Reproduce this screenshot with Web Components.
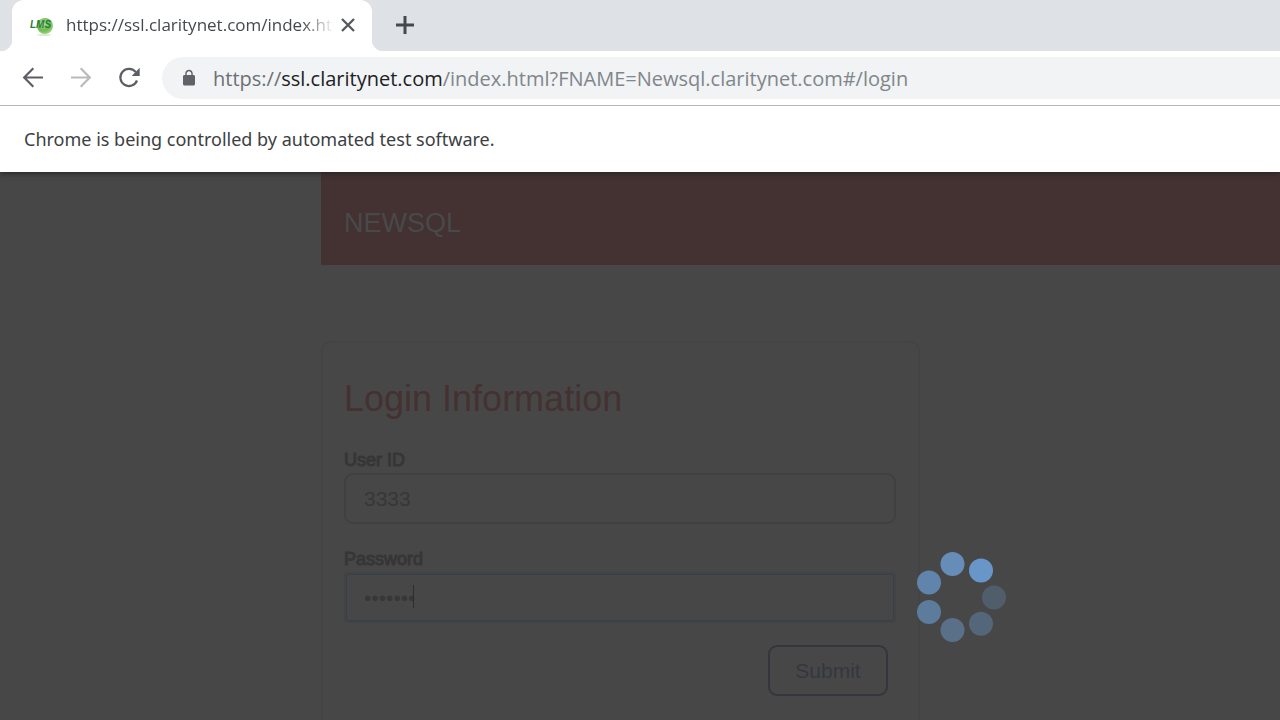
<!DOCTYPE html>
<html lang="en">
<head>
<meta charset="utf-8">
<title>Login</title>
<style>
html, body { margin: 0; height: 100%; }
body { font-family: "Open Sans", "Noto Sans", sans-serif; background: #474747; }
</style>
</head>
<body>
<app-window></app-window>
<script>
function define(name, html, setup) {
  const t = document.createElement('template');
  t.innerHTML = html;
  customElements.define(name, class extends HTMLElement {
    constructor() {
      super();
      this.attachShadow({ mode: 'open' }).appendChild(t.content.cloneNode(true));
    }
    connectedCallback() {
      if (setup) setup(this);
    }
  });
}

define('tab-strip', `
<style>
:host { display: flex; height: 51px; background: #dee1e6; overflow: hidden; }
.edge { width: 12px; background: radial-gradient(circle at 0 39px, #dee1e6 12px, #fff 13px); }
.edge.r { background: radial-gradient(circle at 100% 39px, #dee1e6 12px, #fff 13px); }
.edge i { display: block; height: 39px; background: #dee1e6; }
.tab { display: flex; align-items: center; box-sizing: border-box; width: 360px; padding: 0 12px 2px 17px; background: #fff; border-radius: 12px 12px 0 0; }
.icon { flex: none; margin-right: 12px; }
.title { flex: 1; overflow: hidden; white-space: nowrap; font-size: 17px; line-height: 24px; color: #45494d; -webkit-mask-image: linear-gradient(90deg, #000 calc(100% - 32px), transparent); mask-image: linear-gradient(90deg, #000 calc(100% - 32px), transparent); }
button { flex: none; border: 0; padding: 0 0 2px; background: none; display: flex; align-items: center; justify-content: center; }
.close { width: 24px; padding: 0; height: 24px; margin-left: 2px; }
.new { width: 42px; }
</style>
<div class="edge"><i></i></div>
<div class="tab" role="tab">
  <svg class="icon" width="25" height="24" viewBox="0 0 25 24">
    <defs><radialGradient id="g" cx=".4" cy=".35" r=".7"><stop offset="0" stop-color="#c6e8a8"/><stop offset=".6" stop-color="#6fb84e"/><stop offset="1" stop-color="#a5d68c"/></radialGradient></defs>
    <circle cx="16" cy="13" r="8" fill="url(#g)"/>
    <ellipse cx="15" cy="22" rx="7" ry="1" fill="#d8ecd0"/>
    <text x="1" y="15" font-family="Liberation Sans, Arial, sans-serif" font-size="10" font-weight="700" font-style="italic" fill="#23803c">LMS</text>
  </svg>
  <span class="title">https://ssl.claritynet.com/index.ht</span>
  <button class="close" aria-label="Close tab"><svg width="14" height="14" viewBox="0 0 14 14"><path d="M1 1 13 13M13 1 1 13" stroke="#55595e" stroke-width="2.3"/></svg></button>
</div>
<div class="edge r"><i></i></div>
<button class="new" aria-label="New tab"><svg width="18" height="18" viewBox="0 0 18 18"><path d="M9 0V18M0 9H18" stroke="#45494d" stroke-width="3"/></svg></button>
`);

define('tool-bar', `
<style>
:host { display: flex; align-items: center; gap: 18px; height: 54px; padding-left: 18px; background: #fff; border-bottom: 1px solid #b6b6b6; }
button { flex: none; border: 0; padding: 0; background: none; width: 30px; height: 30px; color: #5b5f64; }
button:disabled { color: #bababa; }
svg { display: block; fill: currentColor; }
.line { fill: none; stroke: currentColor; stroke-width: 2.2; }
.box { flex: 1; display: flex; align-items: center; gap: 15px; height: 42px; padding-left: 18px; background: #f1f3f4; border-radius: 21px 0 0 21px; overflow: hidden; color: #5f6368; }
.url { padding-top: 2px; font-size: 20px; line-height: 28px; white-space: nowrap; color: #80868b; outline: 0; }
.scheme { color: #6c7075; }
.host { color: #202124; }
</style>
<button aria-label="Back"><svg width="30" height="30" viewBox="0 0 30 30"><path class="line" d="M25 14.500H6.500M15.300 5.300 6.200 14.500 15.300 23.700"/></svg></button>
<button aria-label="Forward" disabled><svg width="30" height="30" viewBox="0 0 30 30"><path class="line" d="M5 14.500H23.500M14.700 5.300 23.800 14.500 14.700 23.700"/></svg></button>
<button aria-label="Reload"><svg width="30" height="30" viewBox="0 0 30 30"><path class="line" d="M23 17.500A8.600 8.600 0 1 1 21.800 9.200"/><path d="M25.700 4.700V13H17.700z"/></svg></button>
<div class="box">
  <svg width="18" height="18" viewBox="0 0 24 24"><path d="M18 8h-1V6c0-2.76-2.24-5-5-5S7 3.240 7 6v2H6c-1.100 0-2 .9-2 2v10c0 1.100.9 2 2 2h12c1.100 0 2-.9 2-2V10c0-1.100-.9-2-2-2zm-2.900 0H8.900V6c0-1.710 1.390-3.100 3.100-3.100s3.100 1.390 3.100 3.100v2z"/></svg>
  <div class="url" role="textbox" aria-label="Address" contenteditable="true" spellcheck="false"><span class="scheme">https://</span><span class="host">ssl.claritynet.com</span>/index.html?FNAME=Newsql.claritynet.com#/login</div>
</div>
`);

define('info-bar', `
<style>
:host { display: flex; align-items: center; height: 66px; padding: 0 24px; background: #fff; color: #3c4043; font-family: "Noto Sans", sans-serif; font-size: 18px; line-height: 26px; box-shadow: 0 1px 6px #222; }
</style>
<slot></slot>
`);

define('form-field', `
<style>
:host { display: block; margin-bottom: 22px; }
label { display: block; font-size: 18px; line-height: 26px; color: #363636; -webkit-text-stroke: 1px #363636; }
.wrap { position: relative; }
input { display: block; box-sizing: border-box; width: 100%; height: 51px; padding: 0 18px; border: 2px solid #404040; border-radius: 9px; background: #474747; color: #373737; font: 21px "Liberation Sans", Arial, sans-serif; outline: 0; }
.caret { display: none; position: absolute; left: 69px; top: 13px; width: 1px; height: 23px; background: #2e2e2e; }
:host([active]) input { border-color: #434343; border-radius: 4px; box-shadow: inset 0 0 0 1px #35404a; }
:host([active]) .caret { display: block; }
</style>
<label for="i"></label>
<div class="wrap"><input id="i"><span class="caret"></span></div>
`, el => {
  const r = el.shadowRoot;
  r.querySelector('label').textContent = el.getAttribute('label');
  const i = r.querySelector('input');
  i.type = el.getAttribute('type');
  i.value = el.getAttribute('value');
});

define('page-header', `
<style>
:host { display: block; background: #443132; color: #474a49; padding: 35px 23px 26px; font-size: 27px; line-height: 32px; }
</style>
<slot></slot>
`);

define('login-card', `
<style>
:host { display: block; box-sizing: border-box; max-width: 599px; min-height: 420px; padding: 36px 22px 24px 21px; border: 2px solid #444; border-radius: 9px; }
h1 { margin: 0 0 28px; font-size: 36px; line-height: 40px; font-weight: 400; color: #443132; }
.actions { display: flex; justify-content: flex-end; padding-right: 8px; }
button { box-sizing: border-box; height: 51px; width: 120px; padding: 0; border: 2px solid #35353d; border-radius: 9px; background: none; color: #35373e; font: 21px "Liberation Sans", Arial, sans-serif; }
</style>
<h1>Login Information</h1>
<form-field label="User ID" type="text" value="3333"></form-field>
<form-field label="Password" type="password" value="newsql1" active></form-field>
<div class="actions"><button type="button">Submit</button></div>
`);

define('loading-spinner', `
<style>
:host { display: block; width: 90px; height: 90px; }
svg { display: block; }
</style>
<svg width="90" height="90" viewBox="0 0 90 90" role="img" aria-label="Loading">
  <circle cx="64" cy="18.500" r="12" fill="#6996c9"/>
  <circle cx="35.500" cy="12" r="12" fill="#668db8"/>
  <circle cx="12" cy="30.500" r="12" fill="#6084ac"/>
  <circle cx="12" cy="60" r="12" fill="#5d7b9b"/>
  <circle cx="35.500" cy="78" r="12" fill="#5a7089"/>
  <circle cx="64" cy="71.800" r="12" fill="#546679"/>
  <circle cx="77" cy="45.500" r="12" fill="#505e6b"/>
</svg>
`);

define('login-page', `
<style>
:host { display: block; position: relative; flex: 1; min-height: 0; overflow: hidden; background: #474747; font-family: "Liberation Sans", Arial, sans-serif; }
main { margin-left: calc(25% + 1px); }
login-card { margin-top: 76px; }
loading-spinner { position: absolute; left: calc(75% - 43px); top: 380px; }
</style>
<main>
  <page-header>NEWSQL</page-header>
  <login-card></login-card>
</main>
<loading-spinner></loading-spinner>
`);

define('app-window', `
<style>
:host { display: flex; flex-direction: column; height: 100vh; overflow: hidden; }
tab-strip, tool-bar, info-bar { flex: none; }
info-bar { z-index: 1; }
tool-bar { z-index: 2; }
</style>
<tab-strip></tab-strip>
<tool-bar></tool-bar>
<info-bar>Chrome is being controlled by automated test software.</info-bar>
<login-page></login-page>
`);
</script>
</body>
</html>
